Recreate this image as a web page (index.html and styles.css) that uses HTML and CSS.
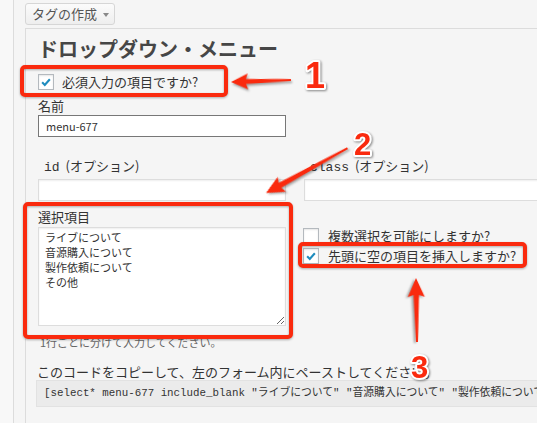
FILE: index.html
```html
<!DOCTYPE html>
<html lang="ja">
<head>
<meta charset="utf-8">
<title>タグの作成</title>
<link rel="stylesheet" href="styles.css">
</head>
<body>
<div class="rail"></div>
<div class="main">
    <button class="tag-btn">タグの作成<span class="caret"></span></button>
    <div class="panel">
        <h3 class="title">ドロップダウン・メニュー</h3>
        <label class="check-row req">
            <span class="box"><svg viewBox="0 0 16 16"><path d="M3.6 8.4 L6.6 11.4 L12.4 4.8"/></svg></span>必須入力の項目ですか?
        </label>
        <div class="field">
            <div class="label">名前</div>
            <input class="text dark" type="text" value="menu-677">
        </div>
        <div class="cols">
            <div>
                <div class="label opt"><code>id</code> (オプション)</div>
                <input class="text" type="text">
            </div>
            <div>
                <div class="label opt"><code>class</code> (オプション)</div>
                <input class="text" type="text">
            </div>
            <div>
                <div class="label">選択項目</div>
                <textarea class="values">ライブについて
音源購入について
製作依頼について
その他</textarea>
                <div class="help">1行ごとに分けて入力してください。</div>
            </div>
            <div class="opts">
                <label class="check-row"><span class="box"></span>複数選択を可能にしますか?</label>
                <label class="check-row">
                    <span class="box"><svg viewBox="0 0 16 16"><path d="M3.6 8.4 L6.6 11.4 L12.4 4.8"/></svg></span>先頭に空の項目を挿入しますか?
                </label>
            </div>
        </div>
        <p class="copy-note">このコードをコピーして、左のフォーム内にペーストしてください。</p>
        <div class="code">[select* menu-677 include_blank "ライブについて" "音源購入について" "製作依頼について" "その他"]</div>
    </div>
</div>

<!-- 注釈: 赤枠・矢印・番号 -->
<svg class="marks" width="537" height="423" viewBox="0 0 537 423">
    <g class="frame">
        <rect x="22" y="67" width="204" height="28" rx="3"/>
        <rect x="25" y="204" width="266" height="133" rx="3"/>
        <rect x="300" y="244" width="225" height="22" rx="3"/>
    </g>
    <g class="arrow">
        <polygon transform="translate(231 82) rotate(-1.9)" points="0,0 17,-8 15,-2.6 60,-1 60,1 15,2.6 17,8"/>
        <polygon transform="translate(266 193) rotate(-28.8)" points="0,0 18,-8.5 16,-2.8 93,-1 93,1 16,2.8 18,8.5"/>
        <polygon transform="translate(416 278) rotate(89.1)" points="0,0 19,-8.5 17,-2.8 64,-1 64,1 17,2.8 19,8.5"/>
    </g>
    <g class="num">
        <text x="305" y="88" font-size="36">1</text>
        <text x="354" y="155" font-size="31">2</text>
        <text x="411" y="378" font-size="31">3</text>
    </g>
</svg>
</body>
</html>
```

FILE: styles.css
```css
html, body {
    margin: 0;
    height: 100%;
    overflow: hidden;
}
body {
    position: relative;
    display: flex;
    background: #f5f5f5;
    color: #333;
    font-family: "Noto Sans CJK JP", "Liberation Sans", sans-serif;
    font-size: 13px;
}
.rail {
    width: 13px;
    flex: none;
    border-right: 1px solid #dcdcdc;
    background: #f8f8f8;
}
.main {
    padding-left: 11px;
    flex: none;
}

.tag-btn {
    display: flex;
    align-items: center;
    gap: 6px;
    box-sizing: border-box;
    width: 90px;
    height: 22px;
    margin: 3px 0 0;
    padding: 0 0 0 6px;
    border: 1px solid #d6d6d6;
    border-radius: 3px;
    background: linear-gradient(#fbfbfb, #eeeeee);
    color: #555;
    font-family: inherit;
    font-size: 13px;
    line-height: 20px;
}
.caret {
    width: 0;
    height: 0;
    border-left: 3.5px solid transparent;
    border-right: 3.5px solid transparent;
    border-top: 4px solid #888;
    margin-top: 1px;
}

.panel {
    width: 600px;
    height: 400px;
    margin-top: 3px;
    padding: 8px 0 0 12px;
    border-top: 1px solid #dcdcdc;
    border-left: 1px solid #dcdcdc;
    background: #f5f5f5;
}
.title {
    margin: 0;
    color: #464646;
    font-size: 20px;
    line-height: 24px;
    font-weight: bold;
}

.check-row {
    display: flex;
    align-items: center;
    gap: 8px;
    height: 20px;
    line-height: 20px;
    white-space: nowrap;
}
.check-row.req {
    margin-top: 11px;
}
.box {
    display: flex;
    align-items: center;
    justify-content: center;
    box-sizing: border-box;
    width: 16px;
    height: 16px;
    flex: none;
    border: 1px solid #b4b9be;
    background: #fff;
    box-shadow: inset 0 1px 2px rgba(0,0,0,.1);
}
.box svg {
    width: 14px;
    height: 14px;
}
.box path {
    fill: none;
    stroke: #1e8cbe;
    stroke-width: 2.4;
}

.field {
    margin-top: 6px;
}
.label {
    line-height: 16px;
    white-space: nowrap;
}
.label.opt {
    padding-left: 6px;
}
.label code {
    font-family: "Liberation Mono", monospace;
    font-size: 13px;
    margin-right: 3px;
}
.text {
    display: block;
    box-sizing: border-box;
    width: 248px;
    height: 22px;
    margin: 1px 0 0;
    padding: 0 7px;
    border: 1px solid #ddd;
    background: #fff;
    box-shadow: inset 0 1px 2px rgba(0,0,0,.07);
    color: #333;
    font-family: inherit;
    font-size: 11px;
}
.text.dark {
    border-color: #777;
    box-shadow: none;
}

.cols {
    display: grid;
    grid-template-columns: 248px 248px;
    column-gap: 18px;
    margin-top: 21px;
}
.cols .text {
    margin-top: 3px;
}
.cols > div:nth-child(3) .label {
    margin-top: 8px;
}
.values {
    display: block;
    box-sizing: border-box;
    width: 248px;
    height: 99px;
    margin-top: 2px;
    padding: 2px 6px;
    border: 1px solid #ddd;
    background: #fff;
    box-shadow: inset 0 1px 2px rgba(0,0,0,.07);
    color: #333;
    font-family: inherit;
    font-size: 11px;
    line-height: 15px;
}
.help {
    margin-top: 9px;
    padding-left: 2px;
    color: #666;
    font-size: 11px;
    line-height: 14px;
}
.opts {
    padding-top: 25px;
    margin-left: -1px;
}
.opts .check-row {
    gap: 9px;
}

.copy-note {
    margin: 15px 0 0 -1px;
    line-height: 16px;
    white-space: nowrap;
}
.code {
    box-sizing: border-box;
    height: 27px;
    margin-left: -2px;
    padding: 0 7px;
    border: 1px solid #e2e2e2;
    background: #ebebeb;
    font-family: "Liberation Mono", "Noto Sans CJK JP", monospace;
    font-size: 10.8px;
    line-height: 25px;
    white-space: nowrap;
    overflow: hidden;
}

/* 注釈レイヤー */
.marks {
    position: absolute;
    top: 0;
    left: 0;
    pointer-events: none;
}
.frame rect {
    fill: none;
    stroke: #fa2a0e;
    stroke-width: 4;
    filter: drop-shadow(0 1px 1px rgba(0,0,0,.3));
}
.arrow polygon {
    fill: #fa2a0e;
    filter: drop-shadow(1px 2px 1px rgba(0,0,0,.35));
}
.num text {
    fill: #fa2a0e;
    stroke: #fff;
    stroke-width: 4;
    stroke-linejoin: round;
    paint-order: stroke;
    font-family: "Liberation Sans", sans-serif;
    font-weight: bold;
    filter: drop-shadow(1px 1px 1px rgba(0,0,0,.45));
}
```
